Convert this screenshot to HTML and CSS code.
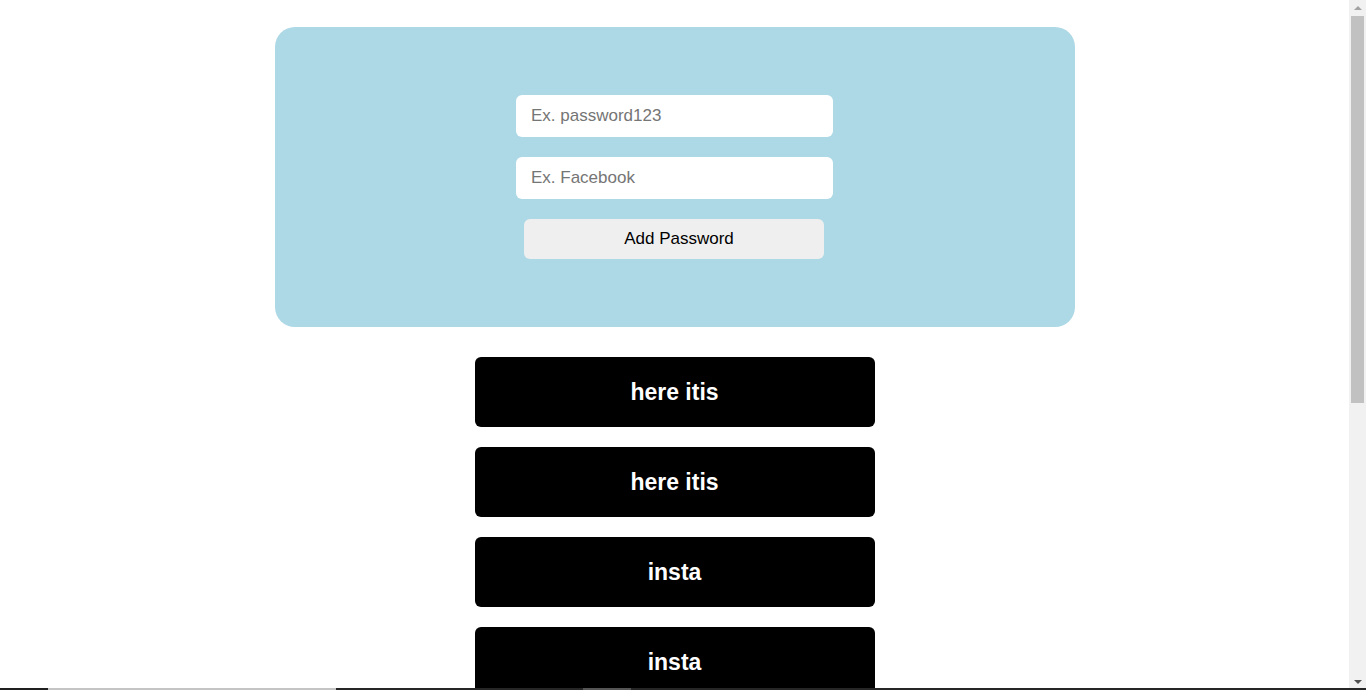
FILE: index.html
```html
<!DOCTYPE html>
<html lang="en">
<head>
<meta charset="utf-8">
<title>Passwords</title>
<link rel="stylesheet" href="styles.css">
</head>
<body>
  <main class="page">
    <section class="panel">
      <form class="form">
        <input class="field" type="text" placeholder="Ex. password123">
        <input class="field" type="text" placeholder="Ex. Facebook">
        <button class="add-btn" type="button">Add Password</button>
      </form>
    </section>
    <ul class="list">
      <li class="card">here itis</li>
      <li class="card">here itis</li>
      <li class="card">insta</li>
      <li class="card">insta</li>
      <li class="card">insta</li>
      <li class="card">insta</li>
      <li class="card">insta</li>
      <li class="card">insta</li>
      <li class="card">insta</li>
    </ul>
  </main>
  <div class="scrollbar" aria-hidden="true">
    <span class="sb-arrow sb-up"></span>
    <span class="sb-track"><span class="sb-thumb"></span></span>
    <span class="sb-arrow sb-down"></span>
  </div>
  <div class="taskbar">
    <span class="seg seg-dark1"></span>
    <span class="seg seg-light"></span>
    <span class="seg seg-dark2"></span>
    <span class="seg seg-gray"></span>
    <span class="seg seg-dark3"></span>
  </div>
</body>
</html>
```

FILE: styles.css
```css
html::-webkit-scrollbar {
  display: none;
}

body {
  margin: 0;
  padding: 0;
  background: #ffffff;
  font-family: "Liberation Sans", Arial, sans-serif;
}

.page {
  display: flex;
  flex-direction: column;
  align-items: center;
  padding: 27px 0 20px;
  margin-right: 17px;
}

.panel {
  box-sizing: border-box;
  width: 800px;
  height: 300px;
  background: #add8e6;
  border-radius: 20px;
  display: flex;
  align-items: center;
  justify-content: center;
}

.form {
  display: flex;
  flex-direction: column;
  align-items: center;
  gap: 20px;
}

.field {
  box-sizing: border-box;
  width: 317px;
  height: 42px;
  border: none;
  border-radius: 6px;
  padding: 0 15px;
  font-family: "Liberation Sans", Arial, sans-serif;
  font-size: 17px;
  color: #000;
  background: #fff;
  outline: none;
}

.field::placeholder {
  color: #757575;
}

.add-btn {
  box-sizing: border-box;
  width: 300px;
  height: 40px;
  border: none;
  border-radius: 6px;
  background: #efefef;
  color: #000;
  font-family: "Liberation Sans", Arial, sans-serif;
  font-size: 17px;
  padding: 0 0 0 10px;
  margin-right: 1px;
}

.list {
  list-style: none;
  margin: 30px 0 0;
  padding: 0;
  display: flex;
  flex-direction: column;
  gap: 20px;
}

.card {
  width: 400px;
  height: 70px;
  background: #000;
  color: #fff;
  border-radius: 6px;
  display: flex;
  align-items: center;
  justify-content: center;
  font-weight: bold;
  font-size: 23px;
}

/* fake classic scrollbar overlay */
.scrollbar {
  position: fixed;
  top: 0;
  right: 0;
  bottom: 0;
  width: 17px;
  background: #f1f1f1;
  display: flex;
  flex-direction: column;
}

.sb-arrow {
  height: 16px;
  flex: none;
  display: flex;
  align-items: center;
  justify-content: center;
}

.sb-up::before {
  content: "";
  width: 0;
  height: 0;
  border-left: 4px solid transparent;
  border-right: 4px solid transparent;
  border-bottom: 4px solid #a3a3a3;
}

.sb-down::before {
  content: "";
  width: 0;
  height: 0;
  border-left: 4px solid transparent;
  border-right: 4px solid transparent;
  border-top: 4px solid #505050;
}

.sb-track {
  flex: 1;
  display: flex;
  flex-direction: column;
  padding: 0 2px;
}

.sb-thumb {
  display: block;
  height: 387px;
  background: #c1c1c1;
}

.taskbar {
  position: fixed;
  left: 0;
  right: 0;
  bottom: 0;
  height: 2px;
  display: flex;
  z-index: 2;
}

.seg { height: 2px; }
.seg-dark1 { width: 48px; background: #1f1f1f; }
.seg-light { width: 288px; background: #c4c4c4; }
.seg-dark2 { width: 247px; background: #262626; }
.seg-gray { width: 48px; background: #555555; }
.seg-dark3 { flex: 1; background: #262626; }
```
